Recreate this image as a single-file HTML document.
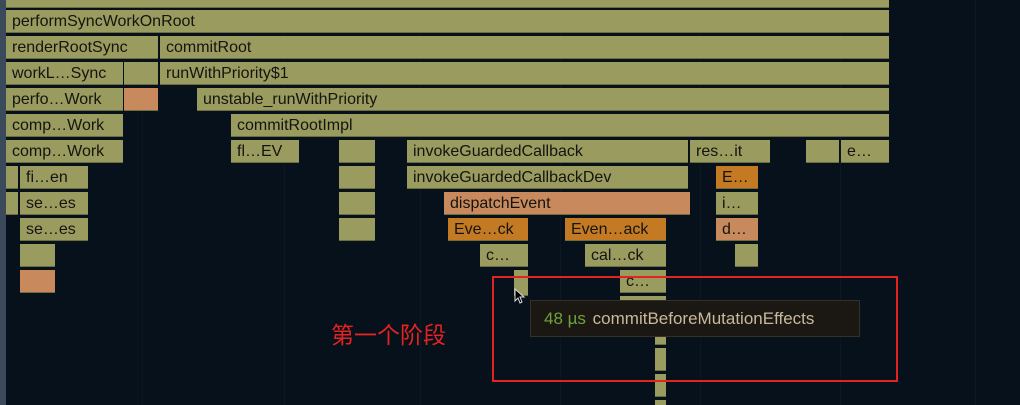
<!DOCTYPE html>
<html><head><meta charset="utf-8"><style>
html,body{margin:0;width:1020px;height:405px;overflow:hidden}
body{background:#06111c;position:relative;font-family:"Liberation Sans",sans-serif}
.b{position:absolute;height:23px;background:#9a9b5e;border-bottom:1px solid #6d6e40;box-sizing:border-box;color:#141410;font-size:16px;line-height:23px;padding-left:6px;white-space:nowrap;overflow:hidden}
.o{background:#c88a5c}
.d{background:#c47a22}
.v{position:absolute;top:0;width:1px;height:405px;background:#0b1824}
</style></head><body>
<div style="position:absolute;left:0;top:0;width:6px;height:405px;background:#3a4a5a"></div>
<div class="v" style="left:142px"></div><div class="v" style="left:284px"></div><div class="v" style="left:420px"></div><div class="v" style="left:560px"></div><div class="v" style="left:700px"></div><div class="v" style="left:840px"></div><div class="v" style="left:975px"></div>
<div class="b" style="left:6px;top:-15px;width:883px"></div>
<div class="b" style="left:6px;top:10px;width:883px">performSyncWorkOnRoot</div>
<div class="b" style="left:6px;top:36px;width:152px">renderRootSync</div>
<div class="b" style="left:160px;top:36px;width:729px">commitRoot</div>
<div class="b" style="left:6px;top:62px;width:117px">workL…Sync</div>
<div class="b" style="left:124px;top:62px;width:34px"></div>
<div class="b" style="left:160px;top:62px;width:729px">runWithPriority$1</div>
<div class="b" style="left:6px;top:88px;width:117px">perfo…Work</div>
<div class="b o" style="left:124px;top:88px;width:34px"></div>
<div class="b" style="left:197px;top:88px;width:692px">unstable_runWithPriority</div>
<div class="b" style="left:6px;top:114px;width:117px">comp…Work</div>
<div class="b" style="left:231px;top:114px;width:658px">commitRootImpl</div>
<div class="b" style="left:6px;top:140px;width:117px">comp…Work</div>
<div class="b" style="left:231px;top:140px;width:68px">fl…EV</div>
<div class="b" style="left:339px;top:140px;width:36px"></div>
<div class="b" style="left:407px;top:140px;width:281px">invokeGuardedCallback</div>
<div class="b" style="left:690px;top:140px;width:80px">res…it</div>
<div class="b" style="left:806px;top:140px;width:33px"></div>
<div class="b" style="left:841px;top:140px;width:48px">e…</div>
<div class="b" style="left:6px;top:166px;width:12px"></div>
<div class="b" style="left:20px;top:166px;width:68px">fi…en</div>
<div class="b" style="left:339px;top:166px;width:36px"></div>
<div class="b" style="left:407px;top:166px;width:281px">invokeGuardedCallbackDev</div>
<div class="b d" style="left:716px;top:166px;width:42px">E…</div>
<div class="b" style="left:6px;top:192px;width:12px"></div>
<div class="b" style="left:20px;top:192px;width:68px">se…es</div>
<div class="b" style="left:339px;top:192px;width:36px"></div>
<div class="b o" style="left:444px;top:192px;width:246px">dispatchEvent</div>
<div class="b" style="left:716px;top:192px;width:42px">i…</div>
<div class="b" style="left:20px;top:218px;width:68px">se…es</div>
<div class="b" style="left:339px;top:218px;width:36px"></div>
<div class="b d" style="left:448px;top:218px;width:80px">Eve…ck</div>
<div class="b d" style="left:565px;top:218px;width:101px">Even…ack</div>
<div class="b o" style="left:716px;top:218px;width:42px">d…</div>
<div class="b" style="left:20px;top:244px;width:35px"></div>
<div class="b" style="left:480px;top:244px;width:48px">c…</div>
<div class="b" style="left:585px;top:244px;width:81px">cal…ck</div>
<div class="b" style="left:735px;top:244px;width:23px"></div>
<div class="b o" style="left:20px;top:270px;width:35px"></div>
<div class="b" style="left:514px;top:270px;width:14px;height:26px"></div>
<div class="b" style="left:620px;top:270px;width:46px">c…</div>
<div class="b" style="left:620px;top:296px;width:46px"></div>
<div class="b" style="left:655px;top:322px;width:11px"></div>
<div class="b" style="left:655px;top:348px;width:11px"></div>
<div class="b" style="left:655px;top:374px;width:11px"></div>
<div class="b" style="left:655px;top:400px;width:11px"></div>
<div style="position:absolute;left:530px;top:300px;width:330px;height:37px;background:#1b1813;border:1px solid #34302a;box-sizing:border-box;font-size:17px;line-height:36px;padding-left:13px;white-space:nowrap"><span style="color:#6ea33a">48 µs</span> <span style="color:#c9b89c;margin-left:2px">commitBeforeMutationEffects</span></div>
<div style="position:absolute;left:492px;top:276px;width:406px;height:106px;border:2px solid #e3231f;box-sizing:border-box"></div>
<div style="position:absolute;left:331px;top:316px;font-size:23px;color:#e3231f;font-family:'Liberation Sans','Noto Sans CJK SC',sans-serif">第一个阶段</div>
<svg style="position:absolute;left:514px;top:288px" width="12" height="16" viewBox="0 0 12 16"><path d="M1 1 L1 13 L4 10 L6 15 L8 14 L6 9 L10 9 Z" fill="#000" stroke="#ddd" stroke-width="1"/></svg>
</body></html>
